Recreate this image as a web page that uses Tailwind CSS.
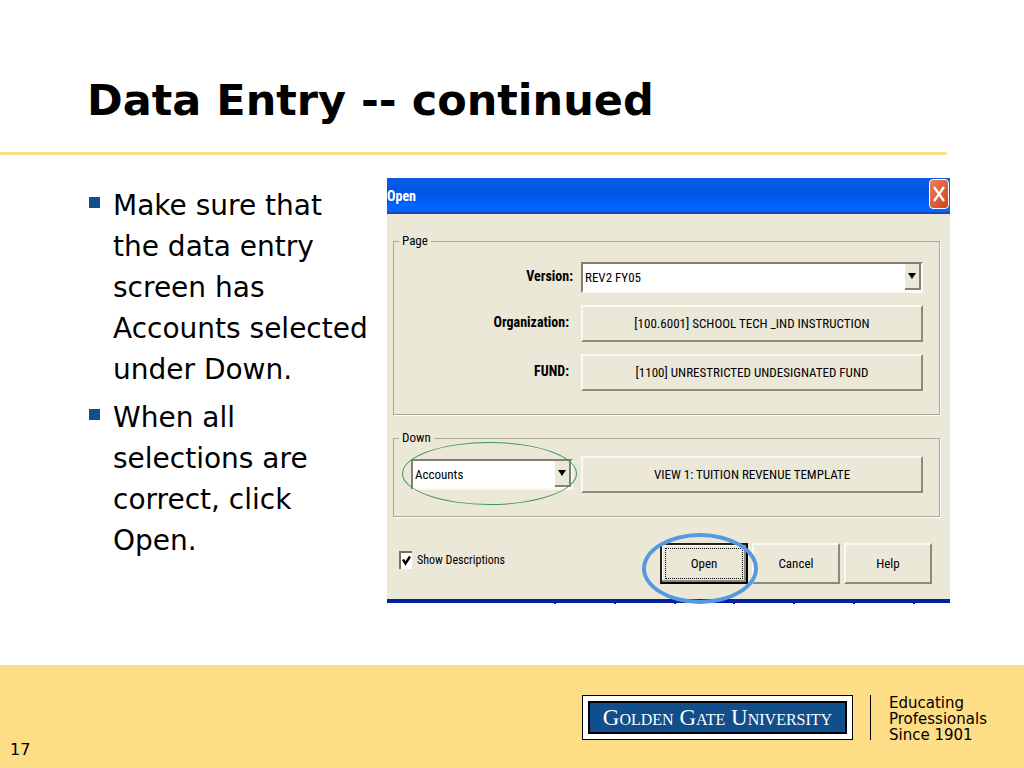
<!DOCTYPE html>
<html lang="en">
<head>
    <meta charset="UTF-8" />
    <meta name="viewport" content="width=device-width, initial-scale=1.0" />
    <title>Data Entry -- continued</title>
    <script src="https://cdn.jsdelivr.net/npm/@tailwindcss/browser@4"></script>
</head>
<body class="bg-white text-black font-['DejaVu_Sans',sans-serif]">
    <div class="min-h-screen flex flex-col">
        <header class="pt-[74px] mr-[77px] border-b-3 border-[#fddd85]">
            <h1 class="pl-[87px] pb-[26px] text-[43px] leading-[52px] font-bold">Data Entry -- continued</h1>
        </header>

        <main class="flex-1 flex items-start pt-[23px] pl-[89px] pr-[74px] pb-[60px]">
            <ul class="w-[298px] shrink-0 pt-[7px] text-[28px] leading-[41px] space-y-[7px]">
                <li class="flex items-start">
                    <span class="w-[11px] h-[11px] mt-3 mr-[13px] shrink-0 bg-[#104e8c]"></span>
                    <span>Make sure that<br />the data entry<br />screen has<br /><span class="whitespace-nowrap">Accounts selected</span><br />under Down.</span>
                </li>
                <li class="flex items-start">
                    <span class="w-[11px] h-[11px] mt-3 mr-[13px] shrink-0 bg-[#104e8c]"></span>
                    <span>When all<br />selections are<br />correct, click<br />Open.</span>
                </li>
            </ul>

            <!-- Open dialog -->
            <section class="relative flex-1 min-w-0 bg-[#ebe8d8] border-b-4 border-[#03229f] text-[13px] leading-5 font-['Roboto_Condensed',Roboto,sans-serif]">
                <div class="h-9 flex items-start justify-between bg-linear-to-b from-[#0a5ce0] via-[#0055e8] via-45% to-[#0066ff] to-85% border-b-2 border-[#1746b8]">
                    <h2 class="text-sm leading-9 font-bold text-white">Open</h2>
                    <button type="button" aria-label="Close" class="mt-px mr-px w-5 h-[30px] rounded-sm border border-white bg-linear-to-br from-[#e88060] to-[#d53c12] flex items-center justify-center">
                        <svg class="w-3 h-4" viewBox="0 0 12 16" fill="none" stroke="#fff" stroke-width="2.2"><path d="M1 1L11 15M11 1L1 15" /></svg>
                    </button>
                </div>

                <div class="pr-[10px] pl-[6px] pt-[17px]">
                    <fieldset class="border border-[#aca899] shadow-[1px_1px_0_#fff] pt-[11px] pb-[23px] pr-4">
                        <legend class="ml-[5px] px-[3px]">Page</legend>
                        <div class="grid grid-cols-[187px_1fr] gap-y-3 items-center">
                            <label for="version" class="pr-2 pb-1 text-right text-sm font-bold">Version:</label>
                            <div class="relative">
                                <select id="version" class="block appearance-none w-full h-[31px] pl-[2px] bg-white border-2 border-t-[#848070] border-l-[#848070] border-b-[#fbfaf2] border-r-[#fbfaf2] text-[13px]"><option>REV2 FY05</option></select>
                                <span class="pointer-events-none absolute right-[2px] top-[2px] w-4 h-[26px] bg-[#ebe8d8] border-r-2 border-b-2 border-[#848070] flex items-center justify-center">
                                    <svg class="w-2 h-[6px]" viewBox="0 0 8 6"><path d="M0 0h8L4 6z" /></svg>
                                </span>
                            </div>
                            <label for="organization" class="pr-3 pb-1 text-right text-sm font-bold">Organization:</label>
                            <button id="organization" type="button" class="h-[37px] border-2 border-t-[#fbfaf0] border-l-[#fbfaf0] border-b-[#8e8a78] border-r-[#8e8a78]">[100.6001] SCHOOL TECH _IND INSTRUCTION</button>
                            <label for="fund" class="pr-3 pb-1 text-right text-sm font-bold">FUND:</label>
                            <button id="fund" type="button" class="h-[37px] border-2 border-t-[#fbfaf0] border-l-[#fbfaf0] border-b-[#8e8a78] border-r-[#8e8a78]">[1100] UNRESTRICTED UNDESIGNATED FUND</button>
                        </div>
                    </fieldset>

                    <fieldset class="mt-[13px] border border-[#aca899] shadow-[1px_1px_0_#fff] pt-2 pb-[23px] pr-4">
                        <legend class="ml-[5px] px-[3px]">Down</legend>
                        <div class="grid grid-cols-[187px_1fr] items-center">
                            <div class="relative ml-[17px] mr-2">
                                <select aria-label="Down" class="block appearance-none w-full h-[31px] pl-[2px] bg-white border-2 border-t-[#848070] border-l-[#848070] border-b-[#fbfaf2] border-r-[#fbfaf2] text-[13px]"><option>Accounts</option></select>
                                <span class="pointer-events-none absolute right-[2px] top-[2px] w-4 h-[26px] bg-[#ebe8d8] border-r-2 border-b-2 border-[#848070] flex items-center justify-center">
                                    <svg class="w-2 h-[6px]" viewBox="0 0 8 6"><path d="M0 0h8L4 6z" /></svg>
                                </span>
                                <span class="pointer-events-none absolute -left-[9px] -right-1 -top-[17px] h-[63px] border border-[#3b9566] rounded-[50%]"></span>
                            </div>
                            <button type="button" class="h-[37px] border-2 border-t-[#fbfaf0] border-l-[#fbfaf0] border-b-[#8e8a78] border-r-[#8e8a78]">VIEW 1: TUITION REVENUE TEMPLATE</button>
                        </div>
                    </fieldset>
                </div>

                <div class="flex items-start justify-between pl-3 pr-[18px] pt-[26px] pb-[15px]">
                    <label class="flex items-center gap-[5px] pt-2 text-xs">
                        <span class="relative w-[13px] h-[18px]">
                            <input type="checkbox" checked class="block appearance-none w-full h-full bg-white border-t-2 border-l-2 border-[#77735f]" />
                            <svg class="pointer-events-none absolute left-[3px] top-1 w-[9px] h-[11px]" viewBox="0 0 9 11" fill="none" stroke="#000" stroke-width="2.4"><path d="M1 4.5L3.5 8.5L8 1.5" /></svg>
                        </span>
                        Show Descriptions
                    </label>
                    <div class="flex gap-1">
                        <div class="relative">
                            <button type="button" class="block w-[88px] h-[41px] p-[3px] border-2 border-t-[#222] border-l-[#222] border-b-black border-r-black shadow-[inset_-2px_-2px_0_#8e8a78,inset_1px_1px_0_#fff]"><span class="flex h-full items-center justify-center border border-dotted border-black">Open</span></button>
                            <span class="pointer-events-none absolute -left-[18px] -right-[10px] -top-[10px] h-[71px] border-4 border-[#559ae0] rounded-[50%]"></span>
                        </div>
                        <button type="button" class="w-[88px] h-[41px] border-2 border-t-[#fbfaf0] border-l-[#fbfaf0] border-b-[#8e8a78] border-r-[#8e8a78]">Cancel</button>
                        <button type="button" class="w-[88px] h-[41px] border-2 border-t-[#fbfaf0] border-l-[#fbfaf0] border-b-[#8e8a78] border-r-[#8e8a78]">Help</button>
                    </div>
                </div>

                <!-- ticks under the bottom edge -->
                <div class="absolute left-[167px] right-[35px] -bottom-[5px] flex justify-between">
                    <i class="w-[2px] h-px bg-[#03229f]"></i><i class="w-[2px] h-px bg-[#03229f]"></i><i class="w-[2px] h-px bg-[#03229f]"></i><i class="w-[2px] h-px bg-[#03229f]"></i><i class="w-[2px] h-px bg-[#03229f]"></i><i class="w-[2px] h-px bg-[#03229f]"></i><i class="w-[2px] h-px bg-[#03229f]"></i>
                </div>
            </section>
        </main>

        <footer class="min-h-[103px] flex justify-between bg-[#fddd85] pl-[10px] pr-9">
            <span class="self-end pb-2 text-base leading-5">17</span>
            <div class="flex items-start pt-[30px]">
                <div class="border border-black bg-white p-[5px] w-[271px]">
                    <div class="h-[33px] border-2 border-black bg-[#104e8c] text-white text-center whitespace-nowrap text-[23px] leading-[29px] [font-variant:small-caps] font-['Liberation_Serif',serif]">Golden Gate University</div>
                </div>
                <div class="ml-[17px] w-px h-[45px] bg-black"></div>
                <p class="ml-[18px] w-[99px] whitespace-nowrap text-[15px] leading-4">Educating<br />Professionals<br />Since 1901</p>
            </div>
        </footer>
    </div>
</body>
</html>
